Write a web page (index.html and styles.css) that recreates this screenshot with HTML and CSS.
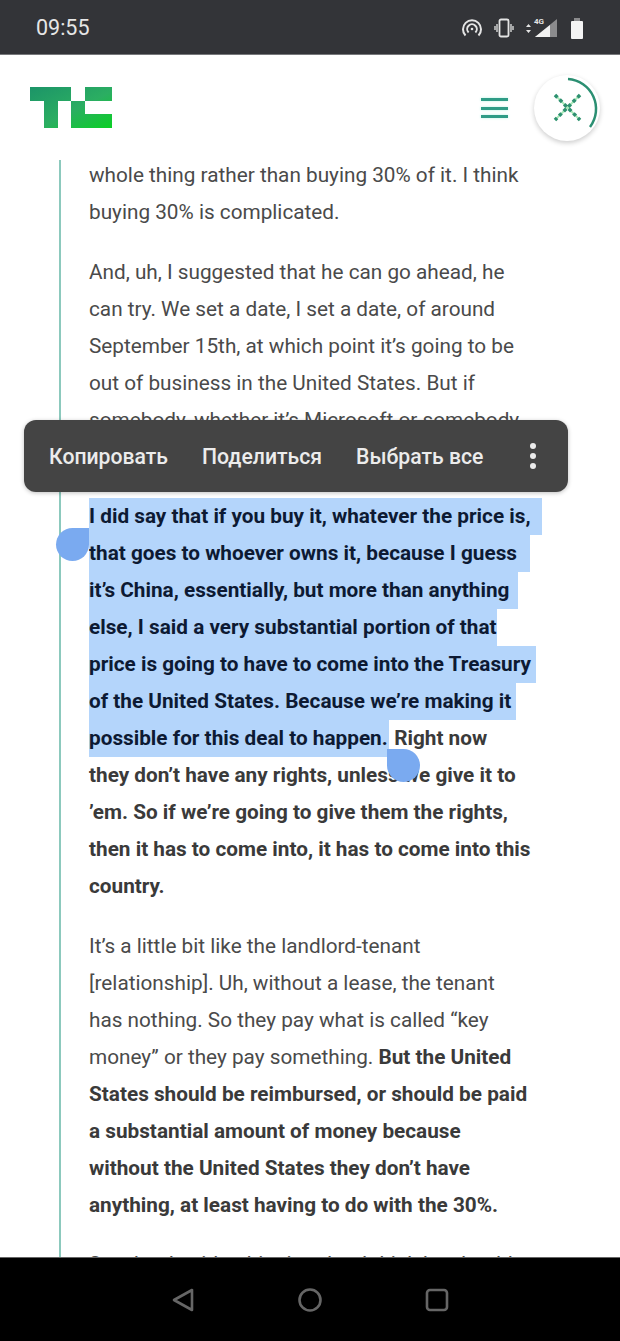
FILE: index.html
```html
<!DOCTYPE html>
<html lang="en">
<head>
  <meta charset="UTF-8" />
  <meta name="viewport" content="width=device-width, initial-scale=1.0"/>
  <title>TechCrunch</title>
  <link rel="stylesheet" href="styles.css">
</head>
<body>
  <div class="phone">
    <div class="status">
      <span class="clock">09:55</span>
      <div class="status-icons">
        <svg width="22" height="20" viewBox="0 0 22 20" fill="none" stroke="#e4e4e4" stroke-width="2">
          <path d="M4.5 17.5a9 9 0 1 1 13 0"/>
          <path d="M7.6 14.5a4.8 4.8 0 1 1 6.8 0"/>
          <circle cx="11" cy="11" r="1.3" fill="#e4e4e4" stroke="none"/>
        </svg>
        <svg width="20" height="20" viewBox="0 0 20 20" fill="none" stroke="#e4e4e4">
          <rect x="5.5" y="1.5" width="9" height="17" rx="1.5" stroke-width="1.8"/>
          <path d="M3 6v8M1 8v4M17 6v8M19 8v4" stroke-width="1.3"/>
        </svg>
        <svg width="34" height="24" viewBox="0 0 34 24">
          <path d="M1 11l2.5-3 2.500 3zM1 14l2.500 3 2.500-3z" fill="#e4e4e4"/>
          <path d="M10 21L32 3v18z" fill="#8b8b8d"/>
          <path d="M10 21l15-12v12z" fill="#f2f2f2"/>
          <text x="9" y="8" class="net">4G</text>
        </svg>
        <svg class="battery" width="14" height="21" viewBox="0 0 14 21">
          <rect x="4" y="0" width="6" height="3" fill="#8b8b8d"/>
          <rect x="1" y="3" width="12" height="18" rx="1" fill="#f4f4f4"/>
        </svg>
      </div>
    </div>

    <header class="top">
      <svg class="logo" width="82" height="41" viewBox="0 0 82 41">
        <defs>
          <linearGradient id="tc" x1="0" y1="0" x2="1" y2="1">
            <stop offset="0" stop-color="#1c9468"/>
            <stop offset="0.55" stop-color="#2bae62"/>
            <stop offset="1" stop-color="#0ad024"/>
          </linearGradient>
        </defs>
        <path fill="url(#tc)" d="M0 0h41v14H28v27H14V14H0zM41 14h14v13h27v14H41zM55 0h27v14H55z"/>
      </svg>
      <div class="top-right">
        <div class="burger"><span></span><span></span><span></span></div>
        <div class="fab">
          <svg width="76" height="76" viewBox="0 0 76 76" fill="none">
            <path d="M39 9A30 30 0 0 1 61 57" stroke="#2b8f72" stroke-width="2.500"/>
            <path d="M26 25l25 25M51 25L26 50" stroke="#a8e8b8" stroke-width="2"/>
            <path d="M26 25l25 25M51 25L26 50" stroke="#2e9070" stroke-width="3.500" stroke-dasharray="3.500 3"/>
          </svg>
        </div>
      </div>
    </header>

    <main class="article">
      <div class="quote">
        <p class="para">
          <span class="line">whole thing rather than buying 30% of it. I think</span>
          <span class="line">buying 30% is complicated.</span>
        </p>
        <p class="para">
          <span class="line">And, uh, I suggested that he can go ahead, he</span>
          <span class="line">can try. We set a date, I set a date, of around</span>
          <span class="line">September 15th, at which point it’s going to be</span>
          <span class="line">out of business in the United States. But if</span>
          <span class="line">somebody, whether it’s Microsoft or somebody</span>
          <span class="line">else, buys it, that’ll be interesting.</span>
        </p>
        <p class="para strong">
          <span class="line"><span class="sel sel-a">I did say that if you buy it, whatever the price is,</span></span>
          <span class="line"><span class="sel sel-b">that goes to whoever owns it, because I guess</span></span>
          <span class="line"><span class="sel sel-c">it’s China, essentially, but more than anything</span></span>
          <span class="line"><span class="sel sel-d">else, I said a very substantial portion of that</span></span>
          <span class="line"><span class="sel sel-e">price is going to have to come into the Treasury</span></span>
          <span class="line"><span class="sel sel-f">of the United States. Because we’re making it</span></span>
          <span class="line"><span class="sel sel-g">possible for this deal to happen.</span> Right now</span>
          <span class="line">they don’t have any rights, unless we give it to</span>
          <span class="line">’em. So if we’re going to give them the rights,</span>
          <span class="line">then it has to come into, it has to come into this</span>
          <span class="line">country.</span>
        </p>
        <p class="para">
          <span class="line">It’s a little bit like the landlord-tenant</span>
          <span class="line">[relationship]. Uh, without a lease, the tenant</span>
          <span class="line">has nothing. So they pay what is called “key</span>
          <span class="line">money” or they pay something. <b class="bold">But the United</b></span>
          <span class="line bold">States should be reimbursed, or should be paid</span>
          <span class="line bold">a substantial amount of money because</span>
          <span class="line bold">without the United States they don’t have</span>
          <span class="line bold">anything, at least having to do with the 30%.</span>
        </p>
        <p class="para">
          <span class="line">So what I said to him is, what I think he should</span>
        </p>
      </div>
    </main>

    <nav class="softkeys">
      <svg width="26" height="26" viewBox="0 0 26 26" fill="none" stroke="#666" stroke-width="2.600" stroke-linejoin="round"><path d="M22 3v20L4 13z"/></svg>
      <svg width="26" height="26" viewBox="0 0 26 26" fill="none" stroke="#666" stroke-width="2.600"><circle cx="13" cy="13" r="10.500"/></svg>
      <svg width="26" height="26" viewBox="0 0 26 26" fill="none" stroke="#666" stroke-width="2.600"><rect x="3" y="3" width="20" height="20" rx="3"/></svg>
    </nav>

    <div class="toolbar">
      <span>Копировать</span>
      <span>Поделиться</span>
      <span>Выбрать все</span>
      <div class="more"><i></i><i></i><i></i></div>
    </div>
    <div class="handle handle-start"></div>
    <div class="handle handle-end"></div>
  </div>
</body>
</html>
```

FILE: styles.css
```css
html, body {
  margin: 0;
  padding: 0;
}
.phone {
  position: relative;
  width: 620px;
  height: 1341px;
  display: flex;
  flex-direction: column;
  overflow: hidden;
  background-color: #fff;
  font-family: Roboto, "Liberation Sans", sans-serif;
}
.status {
  height: 55px;
  flex: none;
  box-sizing: border-box;
  border-bottom: 1px solid #77787b;
  background-color: #333438;
  display: flex;
  align-items: center;
  justify-content: space-between;
  padding: 0 36px 0 36px;
}
.clock {
  color: #e6e6e6;
  font-size: 21.5px;
}
.status-icons {
  display: flex;
  align-items: center;
  gap: 11px;
  margin-top: 2px;
}
.net {
  font-size: 8px;
  font-weight: 700;
  fill: #e4e4e4;
}
.top {
  height: 105px;
  flex: none;
  display: flex;
  align-items: flex-start;
  justify-content: space-between;
  padding: 20px 20px 0 30px;
  box-sizing: border-box;
}
.logo {
  margin-top: 12px;
}
.top-right {
  display: flex;
  align-items: center;
  gap: 26px;
}
.burger {
  width: 27px;
  display: flex;
  flex-direction: column;
  gap: 5.5px;
}
.burger span {
  height: 3px;
  background-color: #2f9c86;
  box-shadow: 0 0 3px #b9f3e3;
}
.fab {
  width: 66px;
  height: 66px;
  border-radius: 50%;
  background-color: #fff;
  box-shadow: 0 2px 5px rgba(0, 0, 0, 0.2);
  position: relative;
}
.fab svg {
  position: absolute;
  left: -5px;
  top: -5px;
}
.article {
  flex: 1;
  min-height: 0;
  overflow: hidden;
}
.quote {
  display: flow-root;
  margin-left: 59px;
  border-left: 2px solid #8cc9bd;
  padding-left: 28px;
  height: 100%;
  color: #4a4a4a;
  font-size: 20.75px;
  line-height: 37px;
}
.para {
  margin: 0 0 22.5px;
}
.para:first-child {
  margin-top: -3px;
}
.line {
  display: block;
  white-space: nowrap;
}
.bold,
.strong {
  font-weight: 700;
  color: #3a3a3a;
}
.sel {
  display: inline-block;
  background-color: #b4d5fb;
  color: #0d1a33;
}
.sel-a { width: 453px; }
.sel-b { width: 441px; }
.sel-c { width: 429px; }
.sel-d { width: 408px; }
.sel-e { width: 447px; }
.sel-f { width: 427px; }
.sel-g { width: 300px; }
.softkeys {
  height: 84px;
  flex: none;
  box-sizing: border-box;
  border-top: 1px solid #666;
  background-color: #000;
  display: flex;
  align-items: center;
  justify-content: center;
  gap: 101px;
}
.toolbar {
  position: absolute;
  left: 24px;
  top: 420px;
  width: 544px;
  height: 72px;
  box-sizing: border-box;
  padding: 0 25px;
  border-radius: 12px;
  background-color: #444444;
  box-shadow: 0 1px 4px rgba(0, 0, 0, 0.25);
  color: #ececec;
  font-size: 21.2px;
  font-weight: 500;
  display: flex;
  align-items: center;
  gap: 34px;
}
.more {
  margin-left: auto;
  margin-right: 7px;
  display: flex;
  flex-direction: column;
  gap: 4px;
}
.more i {
  width: 6px;
  height: 6px;
  border-radius: 50%;
  background-color: #ececec;
}
.handle {
  position: absolute;
  width: 33px;
  height: 33px;
  border-radius: 50%;
  background-color: #7aaaf0;
}
.handle-start {
  left: 56px;
  top: 528px;
  border-top-right-radius: 0;
}
.handle-end {
  left: 387px;
  top: 749px;
  border-top-left-radius: 0;
}
```
